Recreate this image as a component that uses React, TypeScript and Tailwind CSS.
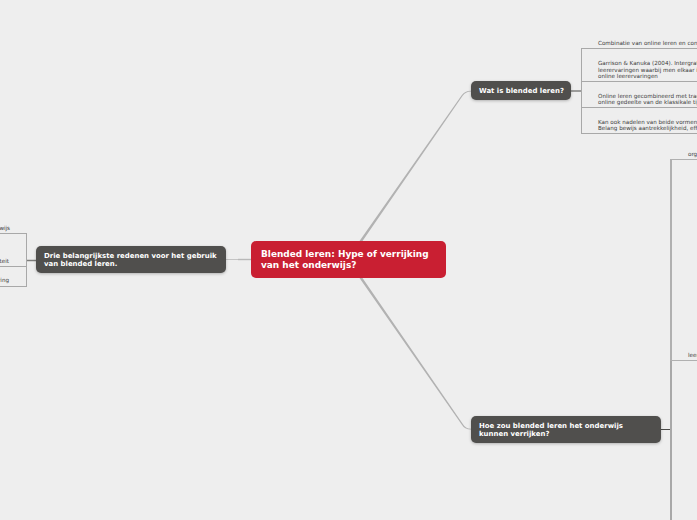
const leaf = "whitespace-nowrap text-[5.6px] leading-[6.4px] text-[#3a3a3a]";
const node = "absolute flex items-center rounded-[5px] bg-[#504f4d] font-bold text-white text-[6.95px] leading-[8.5px] shadow-[0_1px_3px_rgba(0,0,0,0.25)] pl-[8px] pt-[1px]";
const topRow = "flex items-end border-b border-[#a8a8a8] pl-[16px] pb-[1.5px]";
const leftRow = "flex items-end justify-end border-b border-[#a8a8a8] pr-[17px] pb-[2px]";

export default function App() {
  return (
    <div className="relative h-[520px] w-[697px] overflow-hidden bg-[#eeeeee] font-['DejaVu_Sans','Liberation_Sans',sans-serif]">
      <svg className="absolute left-0 top-0" width="697" height="520" viewBox="0 0 697 520" fill="none">
        {/* main branches */}
        <path d="M359.5 241 L362.5 241 L462.5 96 Q465.5 91.5 471 91.5 L471 90.8 Q464.5 90.8 461.5 95.5 Z" fill="#b2b2b2" />
        <path d="M359.5 278 L362.5 278 L462.5 423.5 Q465.5 428.8 471 428.8 L471 429.6 Q464.5 429.6 461.5 424.3 Z" fill="#b2b2b2" />
        <path d="M226 259 H238 V260 H226 Z" fill="#c4c4c4" />
        <path d="M238 258.8 H251 V260.2 H238 Z" fill="#b8b8b8" />
        {/* connectors */}
        <path d="M571 91 H582" stroke="#4a4a48" strokeWidth="1" />
        <path d="M661 429.5 H671" stroke="#4a4a48" strokeWidth="1" />
        <path d="M26 260.5 H36" stroke="#7c7c7a" strokeWidth="1.5" />
      </svg>

      {/* central topic */}
      <div className="absolute left-[251px] top-[241px] flex h-[37px] w-[195px] items-center rounded-[5px] bg-[#c91f32] pl-[10px] pt-[1px] text-[8.95px] font-bold leading-[11px] text-white">
        <span>Blended leren: Hype of verrijking<br />van het onderwijs?</span>
      </div>

      {/* branch topics */}
      <div className={`${node} left-[471px] top-[81px] h-[19px] w-[100px]`}>Wat is blended leren?</div>
      <div className={`${node} left-[471px] top-[416px] h-[27px] w-[190px]`}>
        <span>Hoe zou blended leren het onderwijs<br />kunnen verrijken?</span>
      </div>
      <div className={`${node} left-[36px] top-[246px] h-[27px] w-[190px]`}>
        <span>Drie belangrijkste redenen voor het gebruik<br />van blended leren.</span>
      </div>

      {/* top tree */}
      <div className="absolute left-[581px] top-[38px] flex w-[116px] flex-col">
        <div className={`${topRow} h-[11px] !pl-[17px]`}>
          <div className={leaf}>Combinatie van online leren en contactonderwijs</div>
        </div>
        <div className={`${topRow} h-[33px] border-l`}>
          <div className={leaf}>Garrison &amp; Kanuka (2004). Intergratie van<br />leerervaringen waarbij men elkaar in de klas<br />online leerervaringen</div>
        </div>
        <div className={`${topRow} h-[26px] border-l`}>
          <div className={leaf}>Online leren gecombineerd met traditioneel<br />online gedeelte van de klassikale tijd</div>
        </div>
        <div className={`${topRow} h-[26px] border-l`}>
          <div className={leaf}>Kan ook nadelen van beide vormen<br />Belang bewijs aantrekkelijkheid, effectiviteit</div>
        </div>
      </div>

      {/* bottom tree */}
      <div className="absolute left-[670px] top-[150px] flex h-[370px] w-[27px] flex-col">
        <div className="flex h-[10px] items-end border-b border-[#b0b0b0] pb-[1.5px] pl-[18px]">
          <div className={leaf}>organisatie</div>
        </div>
        <div className="flex h-[201px] items-end border-b border-l-2 border-[#b0b0b0] pb-[1.5px] pl-[16px]">
          <div className={leaf}>leeromgeving</div>
        </div>
        <div className="flex-1 border-l-2 border-[#a8a8a8]" />
      </div>

      {/* left tree */}
      <div className="absolute left-0 top-[224px] flex w-[27px] flex-col">
        <div className={`${leftRow} h-[10px]`}>
          <div className={leaf}>bewijs</div>
        </div>
        <div className={`${leftRow} h-[33px] border-r`}>
          <div className={leaf}>kwaliteit</div>
        </div>
        <div className={`${leftRow} h-[20px] border-r !pb-[3px]`}>
          <div className={leaf}>ervaring</div>
        </div>
      </div>
    </div>
  );
}
